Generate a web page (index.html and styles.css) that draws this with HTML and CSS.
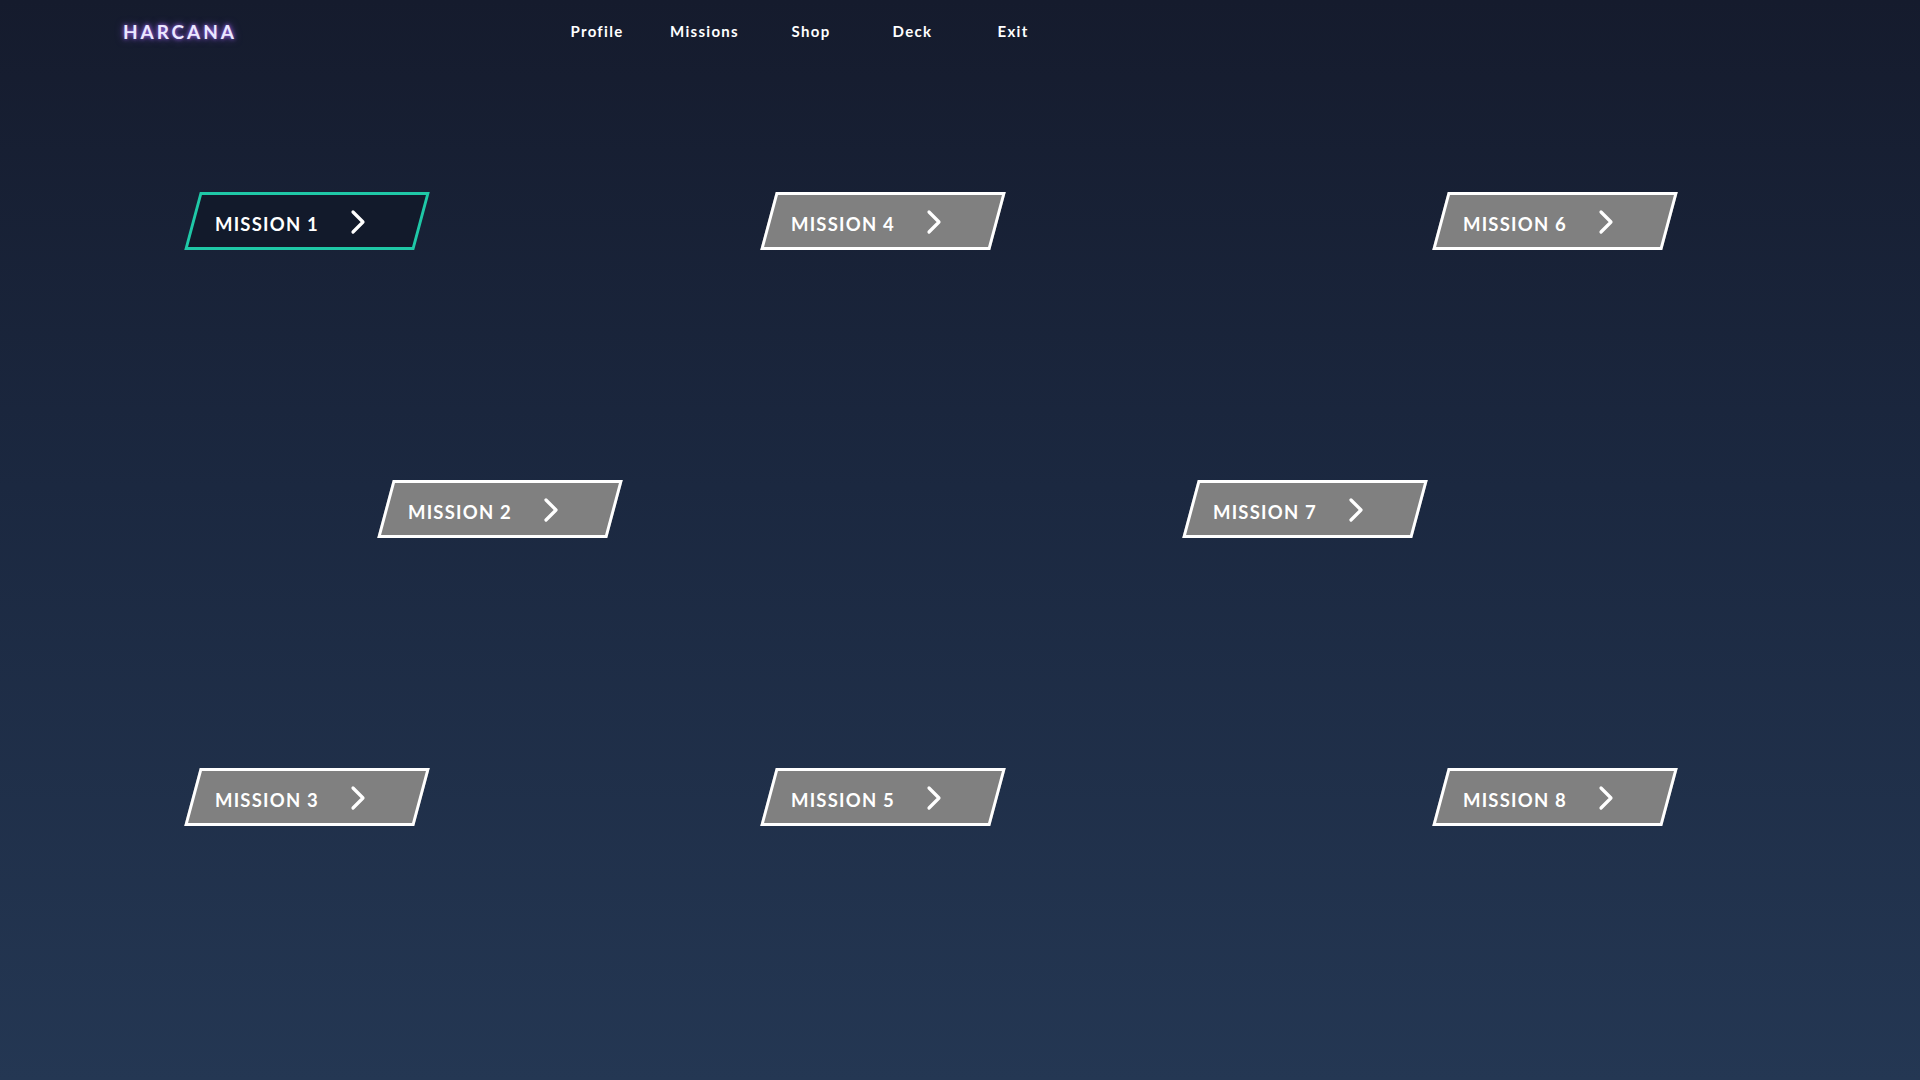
FILE: index.html
```html
<!DOCTYPE html>
<html lang="en">
<head>
<meta charset="utf-8">
<title>Harcana - Missions</title>
<link rel="stylesheet" href="styles.css">
</head>
<body>
<header class="topbar">
  <div class="logo">HARCANA</div>
  <nav class="nav">
    <a class="nav-item" href="#">Profile</a>
    <a class="nav-item" href="#">Missions</a>
    <a class="nav-item" href="#">Shop</a>
    <a class="nav-item" href="#">Deck</a>
    <a class="nav-item" href="#">Exit</a>
  </nav>
</header>
<main class="map">
  <a class="mission active c1 r1" href="#"><span class="label">MISSION 1</span><svg class="chev" viewBox="0 0 16 26" width="16" height="26"><polyline points="3,3 13,13 3,23"/></svg></a>
  <a class="mission c3 r1" href="#"><span class="label">MISSION 4</span><svg class="chev" viewBox="0 0 16 26" width="16" height="26"><polyline points="3,3 13,13 3,23"/></svg></a>
  <a class="mission c5 r1" href="#"><span class="label">MISSION 6</span><svg class="chev" viewBox="0 0 16 26" width="16" height="26"><polyline points="3,3 13,13 3,23"/></svg></a>
  <a class="mission c2 r2" href="#"><span class="label">MISSION 2</span><svg class="chev" viewBox="0 0 16 26" width="16" height="26"><polyline points="3,3 13,13 3,23"/></svg></a>
  <a class="mission c4 r2" href="#"><span class="label">MISSION 7</span><svg class="chev" viewBox="0 0 16 26" width="16" height="26"><polyline points="3,3 13,13 3,23"/></svg></a>
  <a class="mission c1 r3" href="#"><span class="label">MISSION 3</span><svg class="chev" viewBox="0 0 16 26" width="16" height="26"><polyline points="3,3 13,13 3,23"/></svg></a>
  <a class="mission c3 r3" href="#"><span class="label">MISSION 5</span><svg class="chev" viewBox="0 0 16 26" width="16" height="26"><polyline points="3,3 13,13 3,23"/></svg></a>
  <a class="mission c5 r3" href="#"><span class="label">MISSION 8</span><svg class="chev" viewBox="0 0 16 26" width="16" height="26"><polyline points="3,3 13,13 3,23"/></svg></a>
</main>
</body>
</html>
```
FILE: styles.css
```css
* { box-sizing: border-box; }
html, body { margin: 0; padding: 0; }
body {
  width: 1920px;
  height: 1080px;
  overflow: hidden;
  background: linear-gradient(180deg, #151b2d 0%, #1b2840 45%, #243753 100%);
  font-family: Lato, "Open Sans", sans-serif;
  color: #fff;
}
.topbar {
  display: flex;
  align-items: center;
  height: 62px;
  padding-left: 123px;
}
.logo {
  width: 111px;
  font-size: 19px;
  font-weight: 700;
  letter-spacing: 2.9px;
  white-space: nowrap;
  color: #ebe7ff;
  text-shadow: 0 0 4px rgba(170, 110, 255, 0.9), 0 0 8px rgba(150, 90, 240, 0.6);
}
.nav {
  display: flex;
  margin-left: 309px;
}
.nav-item {
  width: 104px;
  text-align: center;
  color: #fff;
  text-decoration: none;
  font-size: 15px;
  font-weight: 700;
  letter-spacing: 1.3px;
}
.nav-item:nth-child(1) { width: 108px; }
.nav-item:nth-child(2) { width: 107px; }
.nav-item:nth-child(3) { width: 106px; }
.nav-item:nth-child(4) { width: 97px; }
.map {
  display: grid;
  grid-template-columns: 192px 193px 383px 422px 250px 1fr;
  grid-template-rows: 58px 58px 58px;
  row-gap: 230px;
  padding-top: 130px;
}
.mission {
  position: relative;
  width: 230px;
  height: 58px;
  display: flex;
  align-items: center;
  padding-left: 23px;
  padding-top: 5px;
  text-decoration: none;
  color: #fff;
  justify-self: start;
}
.mission::before {
  content: "";
  position: absolute;
  inset: 0;
  background: #808080;
  border: 3px solid #fff;
  transform: skewX(-15deg);
}
.mission.active::before {
  background: #121a2b;
  border-color: #1fc8a7;
}
.label {
  position: relative;
  font-size: 18.5px;
  font-weight: 700;
  letter-spacing: 1.2px;
  width: 135px;
}
.chev {
  position: relative;
  margin-top: -3px;
  fill: none;
  stroke: #fff;
  stroke-width: 3.2;
  stroke-linecap: round;
  stroke-linejoin: round;
}
.c1 { grid-column: 2 / span 2; }
.c2 { grid-column: 3 / span 1; }
.c3 { grid-column: 4 / span 1; }
.c4 { grid-column: 5 / span 1; }
.c5 { grid-column: 6 / span 1; }
.r1 { grid-row: 1; }
.r2 { grid-row: 2; }
.r3 { grid-row: 3; }
```
